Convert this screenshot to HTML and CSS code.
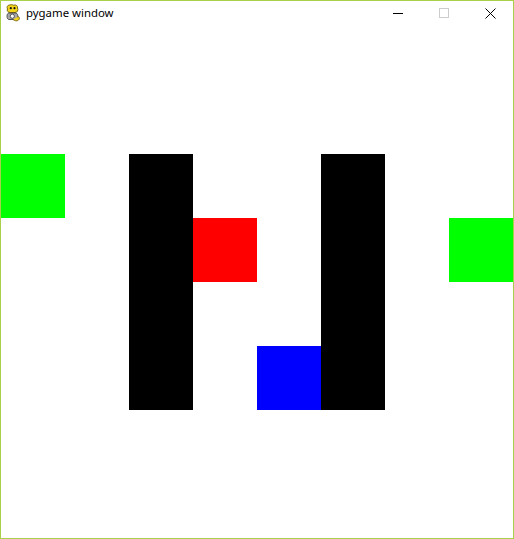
FILE: index.html
```html
<!DOCTYPE html>
<html>
<head>
<meta charset="utf-8">
<title>pygame window</title>
<link rel="stylesheet" href="styles.css">
</head>
<body>
<div class="window">
  <div class="titlebar">
    <svg class="app-icon" width="16" height="18" viewBox="0 0 16 18">
      <path d="M4.5 1 C2.5 1 1.5 3 2.5 5 C1.5 6.5 3 8.5 5 8.5 L10 8.5 C12.5 8.5 13.5 6 12.5 4 C13 2 11 0.3 8.5 1.2 C7 0.5 5.8 0.6 4.5 1 Z" fill="#f5d41c" stroke="#6b5c08" stroke-width="0.9"/>
      <circle cx="5.8" cy="4.2" r="1.1" fill="#111"/>
      <circle cx="9.5" cy="4.2" r="1.1" fill="#111"/>
      <path d="M3.5 9 C1.5 10 1.5 14.5 3.5 15.5 L11 15.5 C13.5 14.5 13.5 10 11 9 Z" fill="#a8a8a8" stroke="#444" stroke-width="0.9"/>
      <circle cx="7.3" cy="12.2" r="2.1" fill="#fff" stroke="#444" stroke-width="0.9"/>
      <path d="M8 15.5 C10 17 12.5 17.5 14 15.5 C15 14 14 12 12.5 13" fill="#f5d41c" stroke="#6b5c08" stroke-width="0.9"/>
    </svg>
    <span class="title">pygame window</span>
    <div class="controls">
      <div class="ctl"><svg width="10" height="10" viewBox="0 0 10 10"><path d="M0 5.5 H10" stroke="#000" stroke-width="1"/></svg></div>
      <div class="ctl"><svg width="10" height="10" viewBox="0 0 10 10"><rect x="0.5" y="0.5" width="9" height="9" fill="none" stroke="#cccccc" stroke-width="1"/></svg></div>
      <div class="ctl"><svg width="11" height="11" viewBox="0 0 11 11"><path d="M0.5 0.5 L10.5 10.5 M10.5 0.5 L0.5 10.5" stroke="#000" stroke-width="1"/></svg></div>
    </div>
  </div>
  <div class="canvas">
    <div class="cell green c1 r3"></div>
    <div class="cell black c3 r3 tall"></div>
    <div class="cell red c4 r4"></div>
    <div class="cell blue c5 r6"></div>
    <div class="cell black c6 r3 tall"></div>
    <div class="cell green c8 r4"></div>
  </div>
</div>
</body>
</html>
```

FILE: styles.css
```css
html, body {
  margin: 0;
  padding: 0;
  background: #ffffff;
}
.window {
  width: 514px;
  height: 539px;
  box-sizing: border-box;
  border: 1px solid #a8d04a;
  display: flex;
  flex-direction: column;
  background: #ffffff;
}
.titlebar {
  height: 25px;
  display: flex;
  align-items: center;
  font-family: "Noto Sans", "DejaVu Sans", sans-serif;
  font-size: 11.4px;
  color: #000;
}
.app-icon {
  margin-left: 4px;
  margin-top: -1px;
}
.title {
  margin-left: 5px;
  margin-top: -2px;
}
.controls {
  margin-left: auto;
  display: flex;
  height: 25px;
}
.ctl {
  width: 46px;
  height: 25px;
  display: flex;
  align-items: center;
  justify-content: center;
  padding-bottom: 1px;
  box-sizing: border-box;
}
.canvas {
  width: 512px;
  height: 512px;
  display: grid;
  grid-template-columns: repeat(8, 64px);
  grid-template-rows: repeat(8, 64px);
}
.cell { grid-row-end: span 1; }
.tall { grid-row-end: span 4; }
.green { background: #00ff00; }
.black { background: #000000; }
.red { background: #ff0000; }
.blue { background: #0000ff; }
.c1 { grid-column: 1; }
.c3 { grid-column: 3; }
.c4 { grid-column: 4; }
.c5 { grid-column: 5; }
.c6 { grid-column: 6; }
.c8 { grid-column: 8; }
.r3 { grid-row-start: 3; }
.r4 { grid-row-start: 4; }
.r6 { grid-row-start: 6; }
```
